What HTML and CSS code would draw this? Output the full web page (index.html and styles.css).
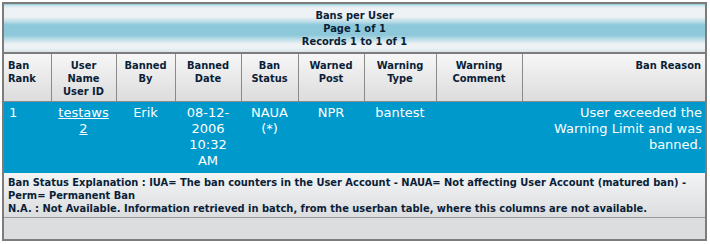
FILE: index.html
```html
<!DOCTYPE html>
<html>
<head>
<meta charset="utf-8">
<link rel="stylesheet" href="styles.css">
</head>
<body>
<div class="frame">
  <div class="caption">
    <div>Bans per User</div>
    <div>Page 1 of 1</div>
    <div>Records 1 to 1 of 1</div>
  </div>
  <table class="grid">
    <colgroup>
      <col class="c1"><col class="c2"><col class="c3"><col class="c4"><col class="c5"><col class="c6"><col class="c7"><col class="c8"><col class="c9">
    </colgroup>
    <thead>
      <tr class="head">
        <th class="left">Ban<br>Rank</th>
        <th>User<br>Name<br>User ID</th>
        <th>Banned<br>By</th>
        <th>Banned<br>Date</th>
        <th>Ban<br>Status</th>
        <th>Warned<br>Post</th>
        <th>Warning<br>Type</th>
        <th>Warning<br>Comment</th>
        <th class="right">Ban Reason</th>
      </tr>
    </thead>
    <tbody>
      <tr class="data">
        <td class="left">1</td>
        <td><a href="#">testaws<br>2</a></td>
        <td>Erik</td>
        <td>08-12-<br>2006<br>10:32<br>AM</td>
        <td>NAUA<br>(*)</td>
        <td>NPR</td>
        <td>bantest</td>
        <td></td>
        <td class="right">User exceeded the<br>Warning Limit and was<br>banned.</td>
      </tr>
      <tr class="note">
        <td colspan="9">Ban Status Explanation : IUA= The ban counters in the User Account - NAUA= Not affecting User Account (matured ban) -<br>Perm= Permanent Ban<br>N.A. : Not Available. Information retrieved in batch, from the userban table, where this columns are not available.</td>
      </tr>
      <tr class="empty">
        <td colspan="9"></td>
      </tr>
    </tbody>
  </table>
</div>
</body>
</html>
```
FILE: styles.css
```css
html, body {
  margin: 0;
  padding: 0;
  background: #ffffff;
}
body {
  padding: 2px;
}
.frame {
  width: 701px;
  border: 2px solid #7c7c7c;
  background: #dcdddf;
  font-family: "DejaVu Sans Condensed", "DejaVu Sans", sans-serif;
  font-size: 11px;
  font-weight: bold;
  color: #0b1e38;
}
.caption {
  height: 43px;
  padding-top: 5px;
  line-height: 13px;
  text-align: center;
  background: linear-gradient(#8ccbdc 0px, #d6e9ef 2px, #eef2f4 5px, #eef2f4 13px, #b7dbe6 18px, #8dc8da 21px, #8dc8da 31px, #b9dce7 35px, #eef2f4 40px, #eef2f4 44px, #d8e4e9 48px);
  border-bottom: 2px solid #7c7c7c;
}
.grid {
  width: 701px;
  table-layout: fixed;
  border-collapse: collapse;
  border-spacing: 0;
}
.c1 { width: 47px; }
.c2 { width: 65px; }
.c3 { width: 59px; }
.c4 { width: 66px; }
.c5 { width: 57px; }
.c6 { width: 66px; }
.c7 { width: 72px; }
.c8 { width: 86px; }
.c9 { width: 183px; }
th, td {
  padding: 0 4px;
  vertical-align: top;
  text-align: center;
}
.head th {
  height: 42px;
  padding-top: 5px;
  line-height: 13px;
  font-weight: bold;
  border-left: 1px solid #8a8a8a;
  border-bottom: 1px solid #8a8a8a;
  background: linear-gradient(#f6f6f6, #dcdcdd);
}
.head th:first-child { border-left: none; }
.left { text-align: left; }
.right { text-align: right; }
.data td {
  height: 68px;
  padding-top: 3px;
  background: #0099cc;
  color: #ffffff;
  font-family: "DejaVu Sans", Verdana, sans-serif;
  font-weight: normal;
  font-size: 13px;
  line-height: 16px;
}
.data td.left { padding-left: 5px; }
.data td.right { padding-right: 3px; }
.data a { color: #ffffff; }
.note td {
  height: 41px;
  padding: 3px 4px 0 4px;
  text-align: left;
  line-height: 13px;
  background: linear-gradient(#f2f4f5, #dcdddf);
  border-bottom: 1px solid #9a9a9a;
}
.empty td {
  height: 21px;
  background: #dcdddf;
}
```
